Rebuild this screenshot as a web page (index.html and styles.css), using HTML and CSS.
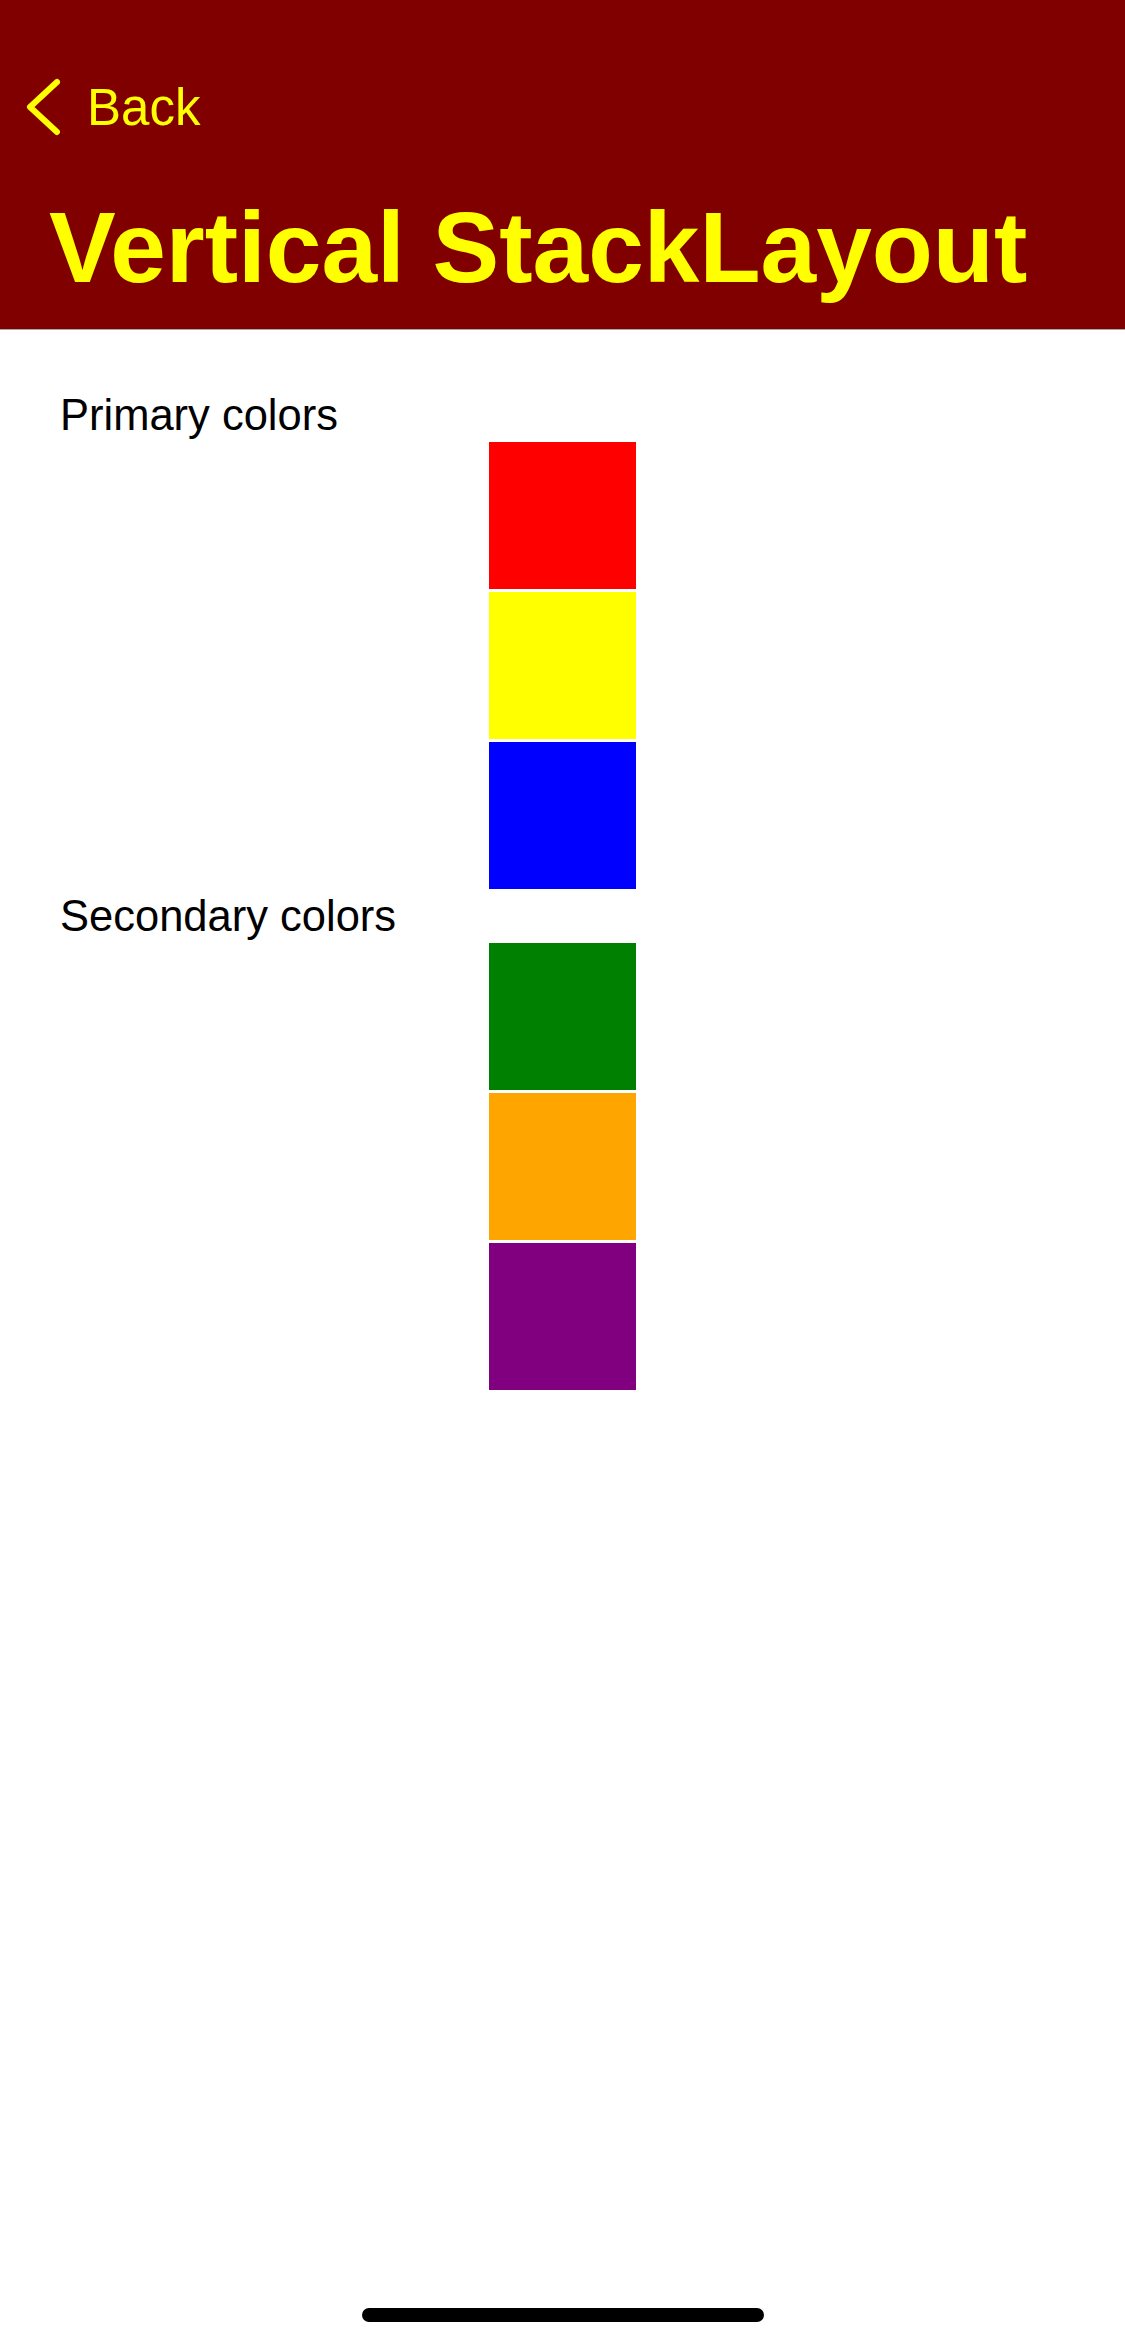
FILE: index.html
```html
<!DOCTYPE html>
<html>
<head>
    <title>Vertical StackLayout</title>
    <link rel="stylesheet" href="styles.css">
</head>
<body>
    <div class="screen">
        <header class="nav-bar">
            <div class="back-row">
                <svg class="back-chevron" width="34" height="58" viewBox="0 0 34 58">
                    <polyline points="31,4 4,29 31,54" fill="none" stroke="#ffff00" stroke-width="6" stroke-linecap="round" stroke-linejoin="round"/>
                </svg>
                <span class="back-text">Back</span>
            </div>
            <h1 class="page-title">Vertical StackLayout</h1>
        </header>

        <main class="stack">
            <div class="stack-label">Primary colors</div>
            <div class="box red"></div>
            <div class="box yellow"></div>
            <div class="box blue"></div>

            <div class="stack-label">Secondary colors</div>
            <div class="box green"></div>
            <div class="box orange"></div>
            <div class="box purple"></div>
        </main>

        <div class="home-indicator"></div>
    </div>
</body>
</html>
```

FILE: styles.css
```css
html, body {
    margin: 0;
    padding: 0;
    background-color: #fff;
}

body {
    font-family: "Liberation Sans", Arial, sans-serif;
}

.screen {
    position: relative;
    width: 1125px;
    height: 2346px;
    overflow: hidden;
}

/* navigation bar */
.nav-bar {
    background-color: #800000;
    color: #ffff00;
    height: 330px;
    box-sizing: border-box;
    padding-top: 78px;
    border-bottom: 1px solid #a8a8a8;
    display: flex;
    flex-direction: column;
}

.back-row {
    display: flex;
    align-items: center;
    height: 58px;
    padding-left: 26px;
}

.back-chevron {
    display: block;
}

.back-text {
    font-size: 51px;
    line-height: 58px;
    margin-left: 27px;
    padding-top: 2px;
}

.page-title {
    margin: 51px 0 0 49px;
    font-size: 100px;
    line-height: 120px;
    font-weight: bold;
    letter-spacing: 0;
}

/* stack */
.stack {
    display: flex;
    flex-direction: column;
    gap: 3px;
    padding: 61px 60px 0 60px;
}

.stack-label {
    font-size: 43.5px;
    line-height: 48px;
    color: #000;
}

.box {
    width: 147px;
    height: 147px;
    align-self: center;
}

.red { background-color: #ff0000; }
.yellow { background-color: #ffff00; }
.blue { background-color: #0000ff; }
.green { background-color: #008000; }
.orange { background-color: #ffa500; }
.purple { background-color: #800080; }

.home-indicator {
    position: absolute;
    left: 362px;
    bottom: 24px;
    width: 402px;
    height: 14px;
    border-radius: 7px;
    background-color: #000;
}
```
